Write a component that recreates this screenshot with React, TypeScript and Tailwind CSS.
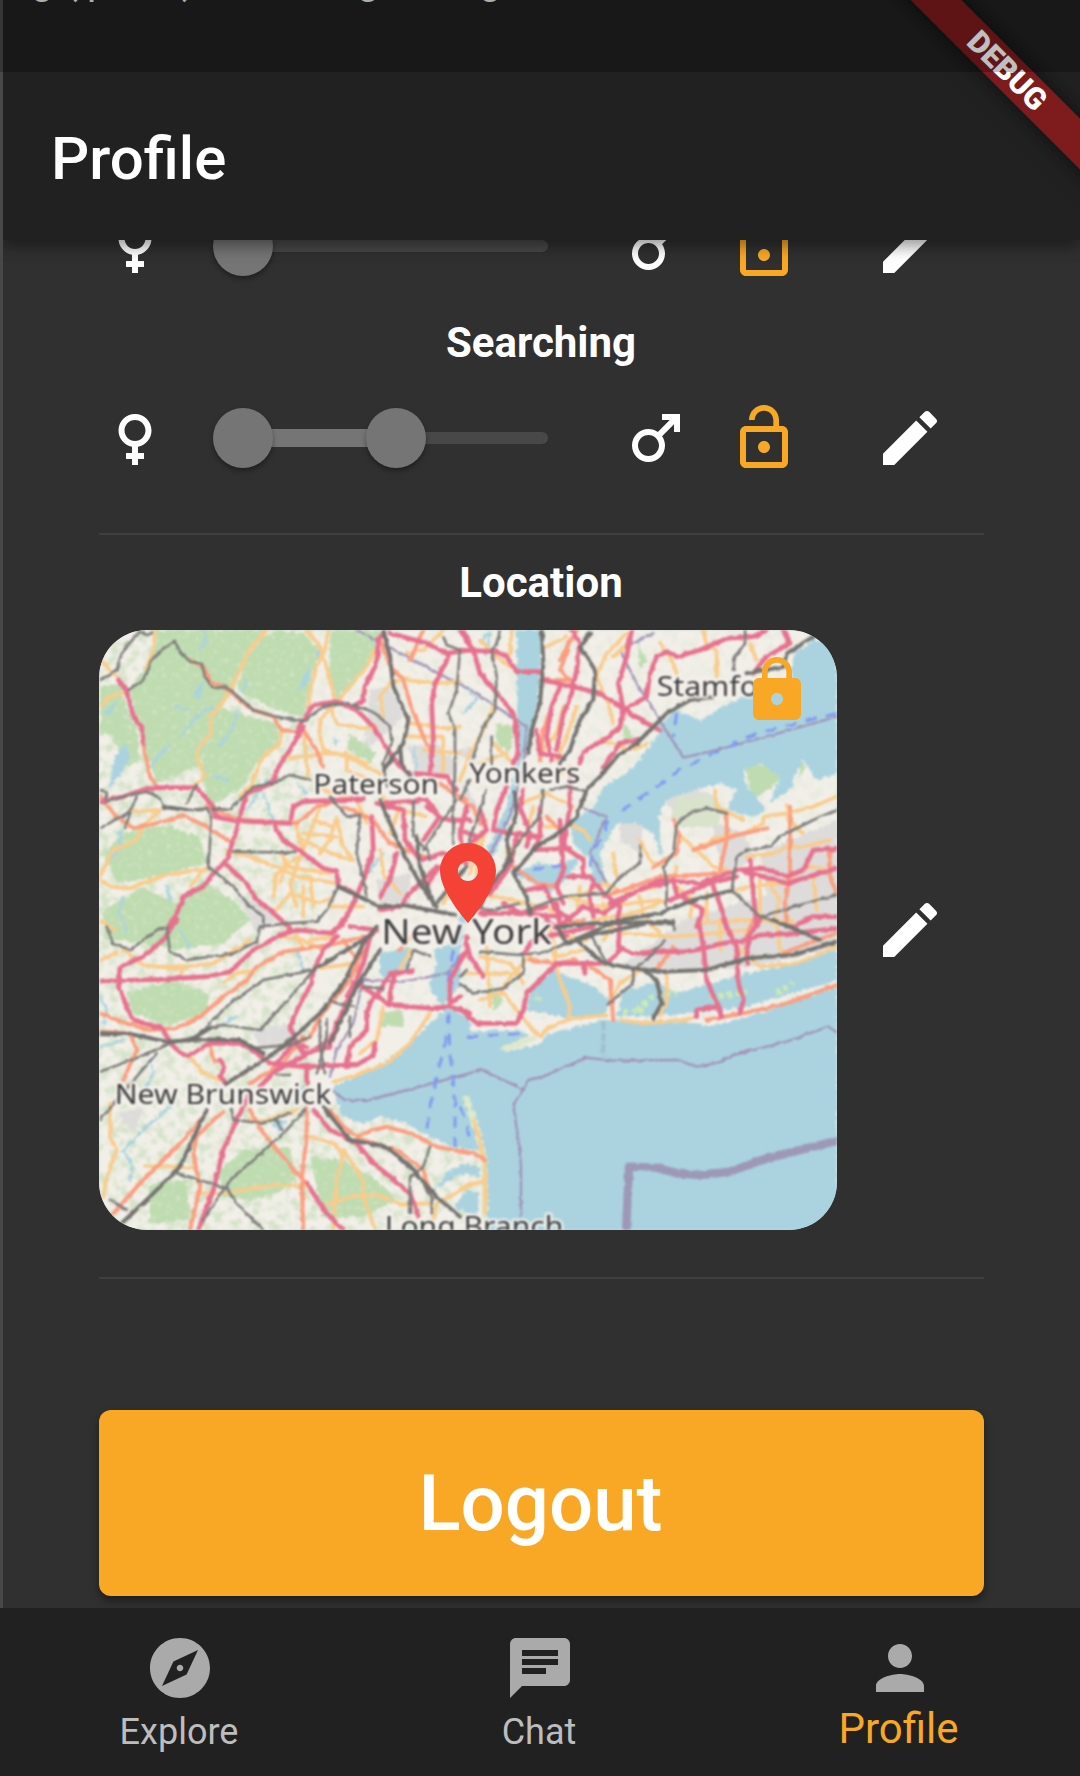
import React from "react";

const ICONS = {
  female:
    "M17.5 9.5C17.5 6.46 15.04 4 12 4S6.5 6.46 6.5 9.5c0 2.7 1.94 4.93 4.5 5.4V17H9v2h2v2h2v-2h2v-2h-2v-2.1c2.56-.47 4.5-2.7 4.5-5.4zm-9 0C8.5 7.57 10.07 6 12 6s3.5 1.57 3.5 3.5S13.93 13 12 13s-3.5-1.57-3.5-3.5z",
  male:
    "M9.5 11c1.93 0 3.5 1.57 3.5 3.5S11.43 18 9.5 18 6 16.43 6 14.5 7.57 11 9.5 11zm0-2C6.46 9 4 11.46 4 14.5S6.46 20 9.5 20s5.5-2.46 5.5-5.5c0-1.16-.36-2.23-.97-3.12L18 7.42V10h2V4h-6v2h2.58l-3.97 3.97C11.73 9.36 10.66 9 9.5 9z",
  lockOpen:
    "M12 17c1.1 0 2-.9 2-2s-.9-2-2-2-2 .9-2 2 .9 2 2 2zm6-9h-1V6c0-2.76-2.24-5-5-5S7 3.24 7 6h1.9c0-1.71 1.39-3.1 3.1-3.1 1.71 0 3.1 1.39 3.1 3.1v2H6c-1.1 0-2 .9-2 2v10c0 1.1.9 2 2 2h12c1.1 0 2-.9 2-2V10c0-1.1-.9-2-2-2zm0 12H6V10h12v10z",
  lock:
    "M18 8h-1V6c0-2.76-2.24-5-5-5S7 3.24 7 6v2H6c-1.1 0-2 .9-2 2v10c0 1.1.9 2 2 2h12c1.1 0 2-.9 2-2V10c0-1.1-.9-2-2-2zm-6 9c-1.1 0-2-.9-2-2s.9-2 2-2 2 .9 2 2-.9 2-2 2zm3.1-9H8.9V6c0-1.71 1.39-3.1 3.1-3.1 1.71 0 3.1 1.39 3.1 3.1v2z",
  edit:
    "M3 17.25V21h3.75L17.81 9.94l-3.75-3.75L3 17.25zM20.71 7.04c.39-.39.39-1.02 0-1.41l-2.34-2.34c-.39-.39-1.02-.39-1.41 0l-1.83 1.83 3.75 3.75 1.83-1.83z",
  place:
    "M12 2C8.13 2 5 5.13 5 9c0 5.25 7 13 7 13s7-7.75 7-13c0-3.87-3.13-7-7-7zm0 9.5c-1.38 0-2.5-1.12-2.5-2.5s1.12-2.5 2.5-2.5 2.5 1.12 2.5 2.5-1.12 2.5-2.5 2.5z",
  explore:
    "M12 10.9c-.61 0-1.1.49-1.1 1.1s.49 1.1 1.1 1.1c.61 0 1.1-.49 1.1-1.1s-.49-1.1-1.1-1.1zM12 2C6.48 2 2 6.48 2 12s4.48 10 10 10 10-4.48 10-10S17.52 2 12 2zm2.19 12.19L6 18l3.81-8.19L18 6l-3.81 8.19z",
  chat:
    "M20 2H4c-1.1 0-1.99.9-1.99 2L2 22l4-4h14c1.1 0 2-.9 2-2V4c0-1.1-.9-2-2-2zM6 9h12v2H6V9zm8 5H6v-2h8v2zm4-6H6V6h12v2z",
  person:
    "M12 12c2.21 0 4-1.79 4-4s-1.79-4-4-4-4 1.79-4 4 1.79 4 4 4zm0 2c-2.67 0-8 1.34-8 4v2h16v-2c0-2.66-5.33-4-8-4z",
};

function Icon({ name, className = "text-white" }: { name: keyof typeof ICONS; className?: string }) {
  return (
    <svg viewBox="0 0 24 24" className={`size-[72px] shrink-0 ${className}`} fill="currentColor">
      <path d={ICONS[name]} />
    </svg>
  );
}

type Tile = {
  x: number;
  y: number;
  minor: string[];
  trunk: string[];
  motorway: string[];
  rail: string[];
  thickRail: string[];
};

const TILES: Tile[] = [
  {
    x: 0,
    y: 0,
    minor: [
      "30,120 80,170", "195,30 190,90 170,140", "30,260 60,230 110,215", "530,30 480,90 440,170 410,230 390,260 360,290 365,340 335,370 320,410 345,470 310,500",
      "650,30 690,80 710,140 725,200 735,250 690,300 690,350 700,390 770,410 830,440 870,460", "715,35 705,90 680,140 660,210 655,260",
      "855,90 830,140 780,200 740,250", "575,335 570,370 520,410 480,500 450,530", "640,330 650,430 655,470", "580,415 650,410 700,400 770,405 830,430",
      "720,260 740,310 820,325 860,320", "770,400 770,450 840,480", "950,180 1040,190 1110,185", "880,290 870,230 900,190 950,175",
      "950,350 1060,350 1060,470", "960,310 1070,325 1110,320", "1000,390 1110,400", "30,770 70,690 140,660 160,620 210,570 130,575", "30,780 60,800 120,805 210,770 320,750 360,745",
      "300,800 340,750", "410,690 480,710 560,740 620,770 740,790", "620,620 640,700 560,760 550,830", "690,560 660,640 620,740 600,790 620,860",
      "620,650 700,690 780,720", "740,590 720,660 690,700", "560,870 600,820 690,850 730,830", "740,600 760,680 790,720", "870,690 880,760 930,820",
      "720,860 820,860", "640,800 640,890", "575,700 590,740 720,760", "1060,30 1000,90 950,100", "700,510 800,540 830,610", "870,520 900,560 1010,590", "30,900 70,930",
      "640,640 740,650", "670,600 730,620", "590,720 570,790", "660,770 670,860", "1070,740 1090,800 1060,850", "930,560 900,640",
    ],
    trunk: [
      "155,350 165,400 180,470 200,500", "300,120 340,140 360,185 410,205 450,240 490,270 550,290", "550,290 575,330 630,335", "640,330 680,390 700,440",
      "30,530 80,590 130,625 220,605 280,585 350,620 420,665", "350,560 410,585 460,600 620,610", "620,610 680,560 740,545", "870,60 900,140 940,180 960,250 1000,350 1025,400",
      "1050,490 1090,520 1130,540", "760,560 850,600 900,670 1000,710", "1000,30 960,120",
    ],
    motorway: [
      "85,180 110,210 130,290 155,320 160,370", "30,545 100,530 150,512 200,503 320,503 370,560 375,590 430,602 600,610 610,560 640,545 820,537",
      "620,335 640,300 670,255 740,245 790,260 820,240 825,200 860,130 865,60 880,40", "640,320 600,390 560,450 545,490 470,520 455,570 440,630 410,720 370,760 340,800 280,830 260,880 230,925",
      "540,490 560,470", "555,620 580,660 640,700 700,745 740,755 745,800 790,815", "410,735 470,790 500,840 540,870 600,925", "740,245 800,270 850,320 880,370 930,440 960,460",
      "900,40 1010,70 1070,100 1140,90", "1075,110 1035,190 1025,250 1030,360 1020,460", "845,590 850,690 820,780 790,850 750,925", "860,550 940,570 945,660 990,720 1060,700 1130,730",
      "980,460 1070,470 1100,510", "920,700 900,780 870,830", "1010,560 1060,600 1140,600", "1040,740 960,820 930,860 870,870", "1000,540 950,545 880,550", "1115,30 1140,70", "1010,800 1040,750 1130,690",
      "1130,560 1110,640 1120,720", "1010,540 1050,590 1000,660",
    ],
    rail: [
      "185,40 170,45 150,35 100,90 80,150 60,165 30,180", "115,210 160,180 185,120 220,85 255,65 270,95 300,125 335,130 345,170 370,205 410,200 450,235 490,270 560,290 640,305 700,260 770,250 850,275 900,320 905,370 880,430 890,500",
      "30,510 50,515 50,545 100,530 170,515 205,530 220,560 290,570 355,565 365,600 355,740 380,760 430,800 480,860 520,890 520,925", "320,495 290,550",
      "660,480 600,465 550,490 490,500 420,570 370,565", "430,695 615,698", "30,625 120,575 140,530", "105,625 120,580", "745,800 710,870 680,905 590,910 510,920", "720,530 770,590 810,585 800,700 825,800 830,840",
      "970,540 970,650 1010,690 1020,720", "1060,50 1070,75 1110,90 1100,210 1075,280 1095,330 1095,450 1090,570 1090,670", "1000,690 1060,600 1100,540",
    ],
    thickRail: [
      "880,30 900,110 910,200 955,300 940,370 880,450", "930,380 935,430 960,470", "870,540 900,610 940,700 990,790 1040,860", "745,800 870,860 940,855 1095,885", "1040,850 1130,740", "980,650 990,740 1030,850", "220,560 290,570",
    ],
  },
  {
    x: 1110,
    y: 0,
    minor: [
      "155,30 150,100", "60,60 110,110 150,140", "320,50 260,80", "500,40 440,100 410,170 450,270 460,310", "500,75 460,110", "600,70 640,130 650,160", "730,35 740,75 770,90 770,170",
      "870,70 890,120", "310,260 290,340 240,400", "350,260 320,350 290,420", "0,480 30,400 60,350 100,260", "60,430 140,400", "100,370 160,430", "420,360 520,390 560,370",
      "180,550 260,520 340,560", "220,560 200,640 140,700", "320,610 370,630 390,660", "240,620 300,620", "330,440 290,470", "765,510 770,560 850,600", "655,645 720,700 760,740 800,750",
      "700,690 780,650 850,640 910,610 910,590 980,580 1060,560 1130,530", "980,555 985,600 1030,640", "860,710 940,700 980,680 1030,680 1110,660", "460,700 470,770", "540,660 570,720 600,740",
      "360,830 430,790 500,820 590,800", "320,830 420,860 600,840", "400,900 520,880 620,840", "650,740 640,790 700,840 690,890", "830,810 870,800 960,790 1050,740 1110,750",
      "720,910 860,900 1000,905", "900,780 900,910", "740,820 740,900", "920,780 960,840 940,910", "40,820 110,830 200,850 250,860", "80,600 60,700 50,760",
      "360,800 350,880", "430,850 440,910", "540,830 550,890", "1060,770 1070,870", "240,860 300,880", "60,640 30,760",
    ],
    trunk: [
      "325,90 300,150 340,190", "350,30 300,120", "245,180 330,180", "300,200 250,330 240,420", "640,600 660,650 650,700 580,740", "800,580 800,660 780,750", "700,690 830,645 920,625",
      "990,560 990,700 990,760 975,860 980,910", "1110,690 1110,770 1130,820", "430,830 520,800 600,770 800,760", "0,540 40,560 60,610", "160,740 230,790 290,800", "260,590 310,640",
    ],
    motorway: [
      "0,30 40,90 60,160 120,230 165,290 175,400 160,430", "0,90 110,95 140,110 170,155 245,155", "335,30 360,70 350,150 335,220 310,280 290,390", "300,200 275,260 260,350 275,420",
      "245,180 340,200 420,220 480,260 560,310 600,330", "515,30 500,110 475,190 490,270 480,320 440,355 370,395 360,430", "490,270 560,230 570,160 590,110 620,95 650,110 720,90 800,55 880,50 920,30",
      "970,30 990,70 920,110 880,160", "530,360 480,370 430,440", "140,500 110,570 100,630 160,640 240,650", "190,510 180,560 210,640 200,680", "60,570 80,630 20,680", "330,470 330,560 310,680 370,720 370,770",
      "240,560 240,650 220,690 330,685", "300,600 310,750 290,800 310,850", "200,810 250,800 290,870 330,900", "320,770 390,770 430,820 480,860 470,910", "400,780 390,830 400,890",
      "310,910 370,860 430,880 500,830 600,780 720,790 830,750 910,745 980,770 1030,750 1060,690 1130,685", "640,780 650,820 730,870 710,920", "760,800 790,880 800,925", "840,750 980,790 1130,745",
      "870,720 880,820 890,920", "450,850 560,800 620,790", "630,840 750,790 830,770", "0,630 50,650 20,690", "60,880 160,880 300,890", "1130,890 1060,890 1000,920", "90,820 150,740 170,650",
      "230,330 240,400 300,410", "130,850 180,880 260,860", "290,850 300,920",
    ],
    rail: [
      "120,30 110,70 95,90 110,170 105,270 70,320 40,410", "80,510 50,600 20,680", "0,540 30,480", "95,350 95,430", "855,30 855,70 825,110 820,150", "620,860 620,780 610,740 640,700 650,610 690,580 740,565 800,580",
      "815,810 830,710 860,690 930,680 960,650 1000,630 1060,600 1130,570", "540,680 540,730 480,770 440,820 310,830 200,870", "900,890 1000,860 1130,825", "270,510 320,500 370,512", "250,510 240,590 180,660 130,740", "0,860 90,870 180,850", "815,810 900,890 1000,920",
    ],
    thickRail: [
      "245,30 250,130 240,250 215,330 205,400", "390,40 360,80 405,150 400,240 360,300 330,390 300,430", "1060,50 980,100 970,140 860,160", "760,230 690,240 620,280 570,330 530,370 470,410 420,470 380,510 350,590 310,630 230,680 160,760 200,830 210,880",
      "480,900 600,880 700,840 815,812", "165,520 170,580 140,660 150,720 90,800 60,860", "300,920 400,910 640,905",
    ],
  },
  {
    x: 0,
    y: 900,
    minor: [
      "30,120 80,100", "100,90 160,135 250,145 370,130 420,100 480,60", "190,140 270,140 275,160", "400,190 440,160 500,150", "580,50 640,60 700,90", "600,20 640,80", "690,145 790,130", "660,60 740,50",
      "960,90 930,150", "880,260 860,360 810,400", "1020,280 960,370 890,430 800,465 730,485", "300,410 340,460 390,480", "60,550 60,650 80,690 50,770 40,830", "165,738 260,740 310,745", "320,820 420,820 480,805 560,795 650,800",
      "660,650 730,670 760,700 740,780 730,930", "760,690 820,780 820,830 855,930", "710,855 780,830 860,825 940,855 1020,850", "1140,790 1080,830 1040,850 1030,900", "470,600 530,600 620,570",
    ],
    trunk: [
      "30,280 110,310 180,330 260,325 330,290 400,230 470,180 500,140 580,95 720,75 820,50", "100,480 140,390 120,340 30,335", "360,380 370,420 400,430", "820,90 780,180 690,290 660,350 600,380",
      "640,350 580,430 480,490", "480,570 520,640 620,760 650,790", "650,560 650,650 635,780 640,930", "720,570 760,620 800,650 850,630 890,620 960,640 1040,680 1140,700", "800,655 920,690 1000,750 1020,820",
      "400,575 370,600 320,650 310,700 330,800 300,930", "340,590 270,670 150,790 70,880", "760,60 800,120 810,200", "970,40 930,90",
    ],
    motorway: [
      "260,0 220,60 160,110 90,140 85,200 110,260 130,300 215,325 250,380 290,410 360,370 450,370 500,400 540,430 640,440 720,437 800,435 850,405 855,370",
      "30,183 210,178 350,170 420,155 490,90 570,45 620,30 730,40 760,0", "740,50 700,90 670,150 665,190 630,250 600,320 620,370 640,400", "840,50 820,130 750,290 720,360 640,410 560,450 510,500",
      "480,520 440,600 400,690 370,810 325,930", "650,440 650,490", "640,400 720,380 790,190", "850,230 830,280 830,330 780,380 770,440", "810,195 900,255 1020,265 1080,260 1140,280", "915,160 900,220 900,250",
      "670,570 720,630 800,670 850,730 900,770 960,820 985,890", "650,790 710,880 760,930", "390,420 405,440 390,470 410,490", "780,20 860,30 820,60", "1130,50 1130,90 1080,180 1080,250 1110,230", "860,230 900,160 970,155", "560,430 610,370 650,380",
    ],
    rail: [
      "50,20 70,70 120,90 200,30 230,20 240,95 290,120 430,100 500,65 510,20", "30,455 150,410 240,370", "30,600 80,540 200,400", "240,370 320,350 420,250 520,180 670,150 620,210 510,330 400,315 360,325", "480,385 600,375 660,350",
      "645,570 580,640 480,730 430,770 400,810 340,900", "260,760 410,805 440,850 520,930", "425,570 430,600 520,610 600,580", "560,600 575,630", "60,840 110,870", "1020,680 1000,740 960,770 960,880", "980,760 1025,830 1025,880",
      "690,300 690,380 705,460", "710,300 710,350 680,460", "950,150 970,90 1020,110", "820,200 880,205", "780,290 780,350", "720,245 790,260", "560,465 600,465",
    ],
    thickRail: [
      "30,340 120,342 230,365 340,358 450,360 520,400", "860,20 820,70 760,190 690,280 580,380 520,420 410,490", "350,570 270,740 180,830 100,905", "820,60 670,150", "870,90 800,200 720,370", "700,560 780,660 890,680 960,740 1040,830 1110,890", "310,355 360,325",
    ],
  },
  {
    x: 1110,
    y: 900,
    minor: [
      "60,110 150,130 190,190", "80,80 90,260", "10,160 100,160 180,160", "210,110 160,160 120,220 60,240", "130,220 210,320 240,350", "280,100 300,180 330,260 325,295", "240,350 270,320 340,295 440,285", "270,40 380,60", "490,40 640,50 760,40 860,30",
      "480,300 560,310 700,295", "620,160 620,240 600,290", "540,150 480,190 450,240", "830,80 900,140 1010,130 1060,110 1130,80", "430,60 460,20", "780,0 780,90", "950,0 960,90 1000,110", "560,0 600,40", "40,600 65,680 75,740 75,880", "0,810 70,780", "370,90 290,110 270,20",
    ],
    trunk: [
      "210,120 290,130 350,120", "375,130 450,180 460,300", "640,80 590,150", "740,300 850,280 980,250 1130,195", "0,695 40,700 75,720", "880,0 850,70", "1130,40 1020,80 970,100", "280,20 370,0",
    ],
    motorway: [
      "0,265 50,310 170,310 190,270 200,220 240,180 290,130 440,130 480,90", "370,130 375,160", "20,70 30,110 70,170", "480,0 475,80 520,100 600,95 680,95 730,85 790,70 860,60 900,45 1000,40 1130,25",
      "715,0 730,80 740,180 770,250 785,290", "790,0 830,80 835,190 850,240 840,280", "770,260 710,270 710,290", "900,0 865,50 860,130", "190,100 220,60 300,40 400,20", "320,50 260,0",
    ],
    rail: [
      "0,190 40,220 130,205 190,160 190,110", "60,95 180,105 260,95 320,70", "390,40 440,130", "615,60 560,120 520,150 520,190 440,255", "640,0 640,30", "20,150 0,170",
    ],
    thickRail: [
      "290,20 320,70 480,0", "350,60 430,130 520,145 600,155 740,150 860,115 1000,105 1130,65", "550,150 590,180 605,250 580,295", "320,70 400,45 560,10 640,10", "940,0 1080,60",
    ],
  },
];

const FOREST = [
  "200,30 530,30 470,100 440,190 400,250 360,340 325,440 200,490 165,390 140,300 120,210 190,100",
  "560,30 640,40 690,90 660,200 640,290 560,270 440,210 470,110 520,50",
  "720,30 870,30 850,120 740,240 715,150",
  "390,260 480,290 560,310 570,370 500,430 460,500 360,560 335,470 340,370",
  "30,200 90,190 110,260 140,320 150,420 110,440 60,340 30,350",
  "40,700 100,640 180,620 240,620 330,650 350,730 200,770 80,790",
  "40,870 160,800 260,850 340,780 440,850 480,900 400,970 260,990 100,960 40,960",
  "110,1120 250,1080 360,1120 350,1180 240,1215 130,1180",
  "380,1660 460,1590 600,1580 620,1680 560,1720 480,1740 400,1730",
  "660,1610 760,1620 860,1680 920,1740 820,1790 700,1790",
  "180,1690 290,1680 300,1800 180,1810", "780,340 860,400 840,430 770,390",
  "1960,430 2060,440 2070,480 1990,540", "2120,410 2150,440 2130,470", "1640,60 1670,120 1650,150", "1600,300 1630,350 1600,370",
  "870,1180 940,1170 940,1220 870,1220", "1220,310 1270,320 1260,400 1220,370", "1200,1090 1240,1140 1210,1180",
];

const URBAN = [
  "840,210 900,200 940,290 900,330 820,400", "950,380 1040,370 1100,430 1090,470 980,450", "1100,390 1150,380 1160,450", "440,830 520,850 560,900 500,940",
  "480,1230 600,1210 640,1270 520,1290", "80,1480 160,1460 130,1540", "1590,1040 1780,900 2240,760 2240,980 2000,1040 1700,1060", "1720,540 1800,500 1880,530 1780,600", "2010,700 2240,600 2240,850 2040,900",
  "1860,600 1960,640 2000,720 1900,760", "1590,560 1660,620 1650,700 1590,660", "860,780 960,760 960,850 870,850", "170,180 230,190 215,225", "1120,480 1160,560 1120,600",
];

const WATER = [
  "2240,60 2170,60 2110,110 2100,180 2000,210 1940,240 1900,260 1830,300 1760,270 1710,310 1700,350 1640,430 1590,470 1540,500 1510,560 1440,610 1450,670 1500,720 1510,790 1550,800 1530,700 1580,610 1640,610 1690,640 1715,710 1705,590 1730,540 1810,510 1890,490 1940,510 1910,570 1990,590 2030,570 1970,500 1960,450 2010,430 2070,470 2040,550 2110,500 2110,470 2140,420 2180,480 2240,460",
  "1280,30 1355,30 1345,220 1320,380 1290,440 1280,550 1220,690 1160,790 1130,880 1110,990 1090,970 1120,850 1190,690 1250,560 1285,400 1278,160",
  "1270,760 1340,730 1400,735 1470,710 1440,770 1400,800 1380,820 1330,790",
  "1030,990 1110,960 1110,1090 1060,1160 1015,1100 1040,1030", "870,1000 960,980 950,1040 890,1080 870,1060",
  "730,1400 790,1370 880,1330 960,1270 1020,1210 1070,1165 1140,1195 1140,1235 1290,1230 1320,1250 1240,1300 1350,1270 1380,1240 1540,1200 1830,1210 1850,1220 2010,1180 2240,1100 2240,1860 1185,1860 1185,1620 1160,1590 1080,1580 1000,1540 950,1510 870,1490 820,1510 760,1490 735,1430",
  "1350,1080 1390,1050 1510,1100 1560,1140 1540,1190 1440,1195 1310,1170 1320,1120",
  "1600,1110 1700,1090 1760,1120 1970,1060 2020,1050 2150,1020 2240,985 2240,1080 1970,1160 1750,1185 1580,1190",
  "1110,1630 1170,1640 1170,1670 1110,1660", "1030,1710 1080,1650 1140,1630 1140,1650 1080,1680", "1090,1760 1130,1710 1170,1720 1160,1790",
  "75,410 110,370 120,420 80,480 55,510", "640,170 660,140 655,190 620,215", "675,90 700,90 690,125", "40,280 85,240 60,285", "320,200 345,180 330,240 310,230", "730,350 750,360 735,380", "540,1500 590,1500 570,1540", "2110,100 2240,40 2240,120",
];

const STREAMS = [
  "270,350 330,280 370,260", "180,440 240,370", "340,30 350,60 330,90", "470,180 460,210", "390,380 430,320 440,270", "30,760 90,680 90,630", "100,830 90,880 110,930", "230,800 240,840",
  "470,570 490,540 530,480", "520,520 550,600", "30,1130 50,1170 40,1210", "180,1320 190,1360 170,1400", "30,1280 100,1260", "120,1680 130,1640 100,1590 150,1540 250,1450", "270,930 300,980", "620,990 640,1050",
  "370,470 420,480", "960,480 980,440 970,380", "620,490 650,520", "1130,200 1160,240 1120,280", "830,760 880,700", "610,1450 640,1400", "260,260 290,270", "400,1210 440,1190", "1170,60 1200,40 1190,100",
];

const BOUNDARY = [
  "800,30 1150,215 1310,320 1300,440 1260,590 1200,700", "1690,40 1590,90 1640,190 1780,413 1900,385 2100,330 2240,290", "840,1440 765,1440 730,1415",
  "840,1440 1100,1370 1175,1350 1300,1408", "1300,1408 1270,1455 1285,1560 1293,1640 1293,1790", "1300,1408 1315,1380 1360,1370 1490,1313 1560,1322 1760,1320 1820,1340 1880,1330 1930,1305 2090,1265 2215,1220 2240,1235",
  "1480,565 1550,590 1500,700 1550,790", "1110,1010 1070,1060 940,1085 820,1080 790,1210 740,1290 720,1370",
];

const FERRY = [
  "1760,280 1750,350", "2240,280 2000,340 1850,410 1770,450 1700,500 1590,575", "1550,600 1545,640 1510,690 1500,740", "1270,770 1340,745 1440,735",
  "1075,1180 1080,1300 1095,1430 1095,1580", "1070,1250 1020,1460 1010,1530", "1110,1010 1075,1060 1090,1100", "1130,1250 1310,1240", "1110,1460 1130,1500 1140,1580", "1090,990 1070,1110",
];

function Lines({ data, stroke, width, dash }: { data: string[]; stroke: string; width: number; dash?: string }) {
  return (
    <g fill="none" stroke={stroke} strokeWidth={width} strokeDasharray={dash} strokeLinejoin="round" strokeLinecap={dash ? "butt" : "round"}>
      {data.map((points) => (
        <polyline key={points} points={points} />
      ))}
    </g>
  );
}

function Shapes({ data, fill }: { data: string[]; fill: string }) {
  return (
    <g fill={fill}>
      {data.map((points) => (
        <polygon key={points} points={points} />
      ))}
    </g>
  );
}

function Roads({ kind, stroke, width }: { kind: "minor" | "trunk" | "motorway" | "rail" | "thickRail"; stroke: string; width: number }) {
  return (
    <>
      {TILES.map((t) => (
        <g key={`${t.x}-${t.y}`} transform={`translate(${t.x} ${t.y})`}>
          <Lines data={t[kind]} stroke={stroke} width={width} />
        </g>
      ))}
    </>
  );
}

const LABELS = [
  { text: "Paterson", x: 670, y: 523, size: 84, length: 377 },
  { text: "Yonkers", x: 1138, y: 490, size: 84, length: 333 },
  { text: "Stamfo", x: 1700, y: 228, size: 84, length: 304 },
  { text: "New York", x: 874, y: 972, size: 104, length: 512 },
  { text: "New Brunswick", x: 74, y: 1452, size: 84, length: 650 },
  { text: "Long Branch", x: 884, y: 1848, size: 84, length: 536 },
];

function CityMap() {
  return (
    <svg viewBox="27 30 2214 1800" className="block h-full w-full blur-[0.8px]" preserveAspectRatio="none">
      <defs>
        <filter id="coast" x="0" y="0" width="1" height="1">
          <feTurbulence type="fractalNoise" baseFrequency="0.08" numOctaves="3" seed="4" />
          <feDisplacementMap in="SourceGraphic" scale="20" xChannelSelector="R" yChannelSelector="G" />
        </filter>
        <filter id="wiggle" x="0" y="0" width="1" height="1">
          <feTurbulence type="fractalNoise" baseFrequency="0.05" numOctaves="2" seed="9" />
          <feDisplacementMap in="SourceGraphic" scale="10" xChannelSelector="R" yChannelSelector="G" />
        </filter>
        <filter id="woods" x="0" y="0" width="1" height="1">
          <feTurbulence type="fractalNoise" baseFrequency="0.035" numOctaves="4" seed="12" />
          <feColorMatrix values="0 0 0 0 0.52  0 0 0 0 0.71  0 0 0 0 0.44  0 4 0 0 -1.75" />
        </filter>
        <filter id="clearings" x="0" y="0" width="1" height="1">
          <feTurbulence type="fractalNoise" baseFrequency="0.07" numOctaves="3" seed="31" />
          <feColorMatrix values="0 0 0 0 0.82  0 0 0 0 0.85  0 0 0 0 0.7  0 5 0 0 -3" />
        </filter>
      </defs>
      <rect x="27" y="30" width="2214" height="1800" fill="#f2efe9" />
      <rect x="27" y="30" width="640" height="1800" filter="url(#woods)" opacity="0.55" />
      <rect x="667" y="1440" width="500" height="390" filter="url(#woods)" opacity="0.55" />
      <rect x="667" y="30" width="1574" height="1170" filter="url(#woods)" opacity="0.15" />
      <g filter="url(#coast)">
        <Shapes data={URBAN} fill="#dddcda" />
        <Shapes data={FOREST} fill="#bfdcb1" />
      </g>
      <rect x="27" y="30" width="860" height="1800" filter="url(#clearings)" opacity="0.5" />
      <g filter="url(#coast)">
        <Lines data={STREAMS} stroke="#abd3df" width={8} />
        <Shapes data={WATER} fill="#aad3df" />
        <Shapes data={["1760,530 1880,530 1900,580 1880,620 1770,620 1740,590"]} fill="#d9e2cb" />
        <Lines data={["1130,1440 1160,1530 1182,1620 1185,1800", "1245,1285 1330,1255"]} stroke="#dfe8cd" width={20} />
        <Lines data={["1640,1170 1690,1130 1760,1120", "1860,1130 1970,1120", "2060,1120 2110,1090", "1600,1180 1660,1170", "1340,1140 1350,1120"]} stroke="#cdebb0" width={18} dash="14 12" />
      </g>
      <g filter="url(#wiggle)">
        <Lines data={["1540,1205 1540,1310"]} stroke="#9fbfd0" width={12} dash="26 8" />
        <Lines data={BOUNDARY} stroke="#a193b7" width={7} />
        <Lines data={["1608,1840 1617,1640 1700,1643 1760,1660 1830,1665 1920,1655 2030,1615 2250,1560"]} stroke="#9e98b7" width={25} />
        <Lines data={FERRY} stroke="#829bf0" width={9} dash="34 28" />
        <Roads kind="minor" stroke="#f9cc8c" width={11} />
        <Roads kind="trunk" stroke="#fa9e80" width={12} />
        <Roads kind="motorway" stroke="#e6718e" width={14} />
        <Roads kind="rail" stroke="#7f7e7b" width={8} />
        <Roads kind="thickRail" stroke="#747370" width={12} />
      </g>
      <g fontFamily="'Noto Sans', sans-serif" fill="#3d3d3d" stroke="#f6f2ee" strokeOpacity="0.75" strokeWidth="16" strokeLinejoin="round" paintOrder="stroke">
        {LABELS.map((l) => (
          <text key={l.text} x={l.x} y={l.y} fontSize={l.size} textLength={l.length} lengthAdjust="spacingAndGlyphs">
            {l.text}
          </text>
        ))}
      </g>
    </svg>
  );
}

const thumb = "absolute top-1/2 size-[60px] -translate-y-1/2 rounded-full bg-[#757575] shadow-[0_3px_5px_rgba(0,0,0,0.35)]";

function PreferenceRow({ range }: { range?: boolean }) {
  return (
    <div className="flex h-[72px] items-center pl-[99px]">
      <Icon name="female" />
      <div className="relative ml-[42px] h-[60px] w-[335px]">
        <div className="absolute top-6 right-0 left-[30px] h-3 rounded-full bg-[#484848]" />
        {range && <div className="absolute top-[21px] left-[30px] h-[18px] w-[153px] bg-[#757575]" />}
        <div className={`${thumb} left-0`} />
        {range && <div className={`${thumb} left-[153px]`} />}
      </div>
      <Icon name="male" className="ml-[72px] text-white" />
      <Icon name="lockOpen" className="ml-9 text-[#f9a825]" />
      <Icon name="edit" className="ml-[74px] text-white" />
    </div>
  );
}

function NavItem({ icon, label, active }: { icon: keyof typeof ICONS; label: string; active?: boolean }) {
  return (
    <div className="flex flex-1 flex-col items-center pt-6">
      <Icon name={icon} className="text-[#aaaaaa]" />
      {active ? (
        <span className="mr-[3px] text-[42px] leading-[49px] text-[#f9a825]">{label}</span>
      ) : (
        <span className="mt-[7px] mr-[2px] text-[36px] leading-[42px] text-[#bdbdbd]">{label}</span>
      )}
    </div>
  );
}

export default function App() {
  return (
    <div className="relative flex h-[1776px] w-[1080px] flex-col overflow-hidden bg-[#303030] font-['Roboto',sans-serif] text-white">
      {/* Edge of the neighbouring page */}
      <div className="absolute top-0 left-0 z-20 h-[1608px] w-[3px] bg-[#484848]" />

      <header className="relative z-10 ml-[3px] h-[240px] shrink-0 bg-[#212121] shadow-[0_6px_14px_rgba(0,0,0,0.35),0_0_24px_rgba(0,0,0,0.15)]">
        {/* Descenders of the line scrolled past the top edge */}
        <div className="flex h-[72px] overflow-hidden text-[40px] leading-[49px] text-[#e8e8e8]">
          <div className="-mt-[44px] flex h-[49px] pl-[28px]">
            <span className="w-[42px]">g</span>
            <span className="w-[14px] pt-[2px]">,</span>
            <span className="w-[95px]">p</span>
            <span className="w-[175px] pt-[2px]">,</span>
            <span className="w-[122px]">g</span>
            <span>g</span>
          </div>
        </div>
        <h1 className="mt-[52px] pl-12 text-[60px] leading-[70px] font-medium">Profile</h1>
      </header>

      <main className="-mt-[30px] h-[1398px] shrink-0 overflow-hidden">
        <PreferenceRow />
        <h2 className="mt-[36px] h-[84px] pl-[2px] text-center text-[42px] leading-[49px] font-bold">Searching</h2>
        <PreferenceRow range />
        <div className="mt-[59px] mr-24 ml-[99px] h-[2px] bg-[#3f3f3f]" />
        <h2 className="mt-[23px] h-[72px] pl-[2px] text-center text-[42px] leading-[49px] font-bold">Location</h2>
        <div className="flex items-center pl-[99px]">
          <div className="relative h-[600px] w-[738px] overflow-hidden rounded-[48px] bg-[#c5dcdc]">
            <CityMap />
            <div className="absolute top-6 right-[24.5px]">
              <Icon name="lock" className="text-[#f9a825]" />
            </div>
            <div className="absolute top-[205px] left-[320.5px]">
              <svg viewBox="0 0 24 24" className="size-24 text-[#f44336]" fill="currentColor">
                <path d={ICONS.place} />
              </svg>
            </div>
          </div>
          <Icon name="edit" className="ml-[37px] text-white" />
        </div>
        <div className="mt-[47px] mr-24 ml-[99px] h-[2px] bg-[#3f3f3f]" />
        <button className="mt-[131px] ml-[99px] flex h-[186px] w-[885px] items-center justify-center rounded-[12px] bg-[#f9a825] pt-[2px] pr-[2px] text-[78px] leading-[92px] font-medium shadow-[0_5px_8px_rgba(0,0,0,0.4)]">
          Logout
        </button>
      </main>

      <nav className="relative z-10 flex h-[168px] shrink-0 bg-[#212121]">
        <NavItem icon="explore" label="Explore" />
        <NavItem icon="chat" label="Chat" />
        <NavItem icon="person" label="Profile" active />
      </nav>

      {/* Diagonal corner ribbon */}
      <div className="absolute top-0 right-0 z-20 size-[240px] overflow-hidden">
        <div className="absolute top-[53px] right-[-127px] flex h-[36px] w-[400px] rotate-45 items-center justify-center bg-[#7e1b1c] text-[30.6px] leading-[36px] font-black shadow-[0_0_22px_rgba(0,0,0,0.6)]">
          DEBUG
        </div>
      </div>

      {/* Status bar scrim */}
      <div className="absolute top-0 left-0 z-30 h-[72px] w-full bg-black/25" />
    </div>
  );
}
